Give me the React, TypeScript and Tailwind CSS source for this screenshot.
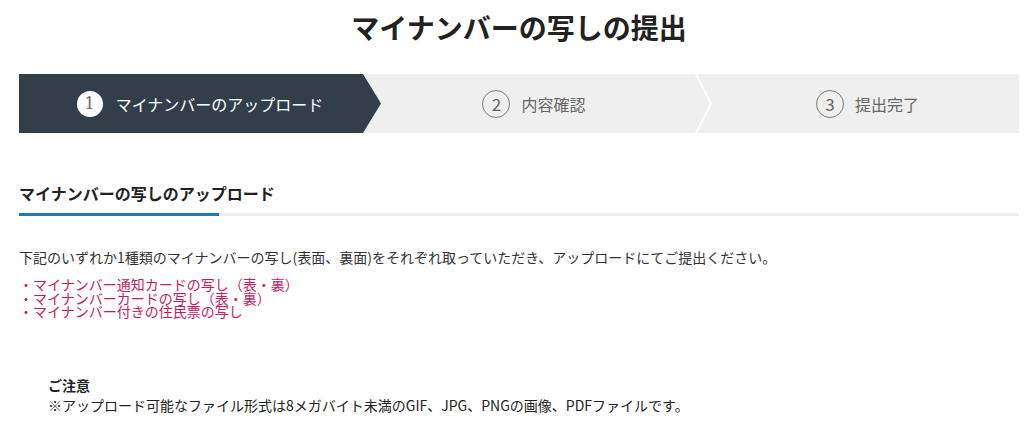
import React from "react";

const font = { fontFamily: '"Noto Sans CJK JP", "Noto Sans", sans-serif' };

export default function App() {
  return (
    <div className="w-[1032px] h-[436px] bg-white text-[#333]" style={font}>
      <div className="w-[1000px] ml-[19px]">
        <h1 className="pt-[6px] h-[74px] text-center text-[28px] leading-[42px] font-bold text-[#222]">
          マイナンバーの写しの提出
        </h1>
        <div className="flex h-[59px] bg-[#efefef]">
          <div
            className="relative z-10 w-[362px] h-full bg-[#323f4b] flex items-center justify-center gap-[13px]"
            style={{ clipPath: "polygon(0 0, 344px 0, 362px 50%, 344px 100%, 0 100%)" }}
          >
            <span className="w-[26px] h-[26px] rounded-full bg-white text-[#666] flex items-center justify-center text-[16px] leading-none" style={{ fontFamily: '"DejaVu Serif", serif' }}>
              1
            </span>
            <span className="text-white text-[16px] leading-none">マイナンバーのアップロード</span>
          </div>
          <div className="relative -ml-[17px] w-[340px] h-full flex items-center justify-center gap-[11px]">
            <span className="w-[28px] h-[28px] rounded-full border border-[#777] text-[#666] flex items-center justify-center text-[17px] leading-none">
              2
            </span>
            <span className="text-[#666] text-[16px] leading-none">内容確認</span>
            <svg className="absolute right-[-10px] top-0" width="20" height="59" viewBox="0 0 20 59">
              <polyline points="2,0 17,29.5 2,59" fill="none" stroke="#ffffff" strokeWidth="2" />
            </svg>
          </div>
          <div className="flex-1 h-full flex items-center justify-center gap-[11px] pl-[12px]">
            <span className="w-[28px] h-[28px] rounded-full border border-[#777] text-[#666] flex items-center justify-center text-[17px] leading-none">
              3
            </span>
            <span className="text-[#666] text-[16px] leading-none">提出完了</span>
          </div>
        </div>

        <div className="mt-[48px]">
          <h2 className="text-[16px] font-bold leading-[24px] text-[#222]">
            マイナンバーの写しのアップロード
          </h2>
          <div className="mt-[8px] h-[3px] bg-[#eeeeee] flex">
            <div className="w-[200px] h-full bg-[#1f7bbf]" />
          </div>
        </div>

        <p className="mt-[32px] text-[14px] leading-[18px] text-[#333]">
          下記のいずれか1種類のマイナンバーの写し(表面、裏面)をそれぞれ取っていただき、アップロードにてご提出ください。
        </p>
        <ul className="mt-[12px] text-[14px] leading-[13.5px] text-[#c41c62]">
          <li>・マイナンバー通知カードの写し（表・裏）</li>
          <li>・マイナンバーカードの写し（表・裏）</li>
          <li>・マイナンバー付きの住民票の写し</li>
        </ul>

        <div className="mt-[56px] pl-[29px] text-[14px] leading-[20px] text-[#222]">
          <div className="font-bold">ご注意</div>
          <div>※アップロード可能なファイル形式は8メガバイト未満のGIF、JPG、PNGの画像、PDFファイルです。</div>
        </div>
      </div>
    </div>
  );
}
